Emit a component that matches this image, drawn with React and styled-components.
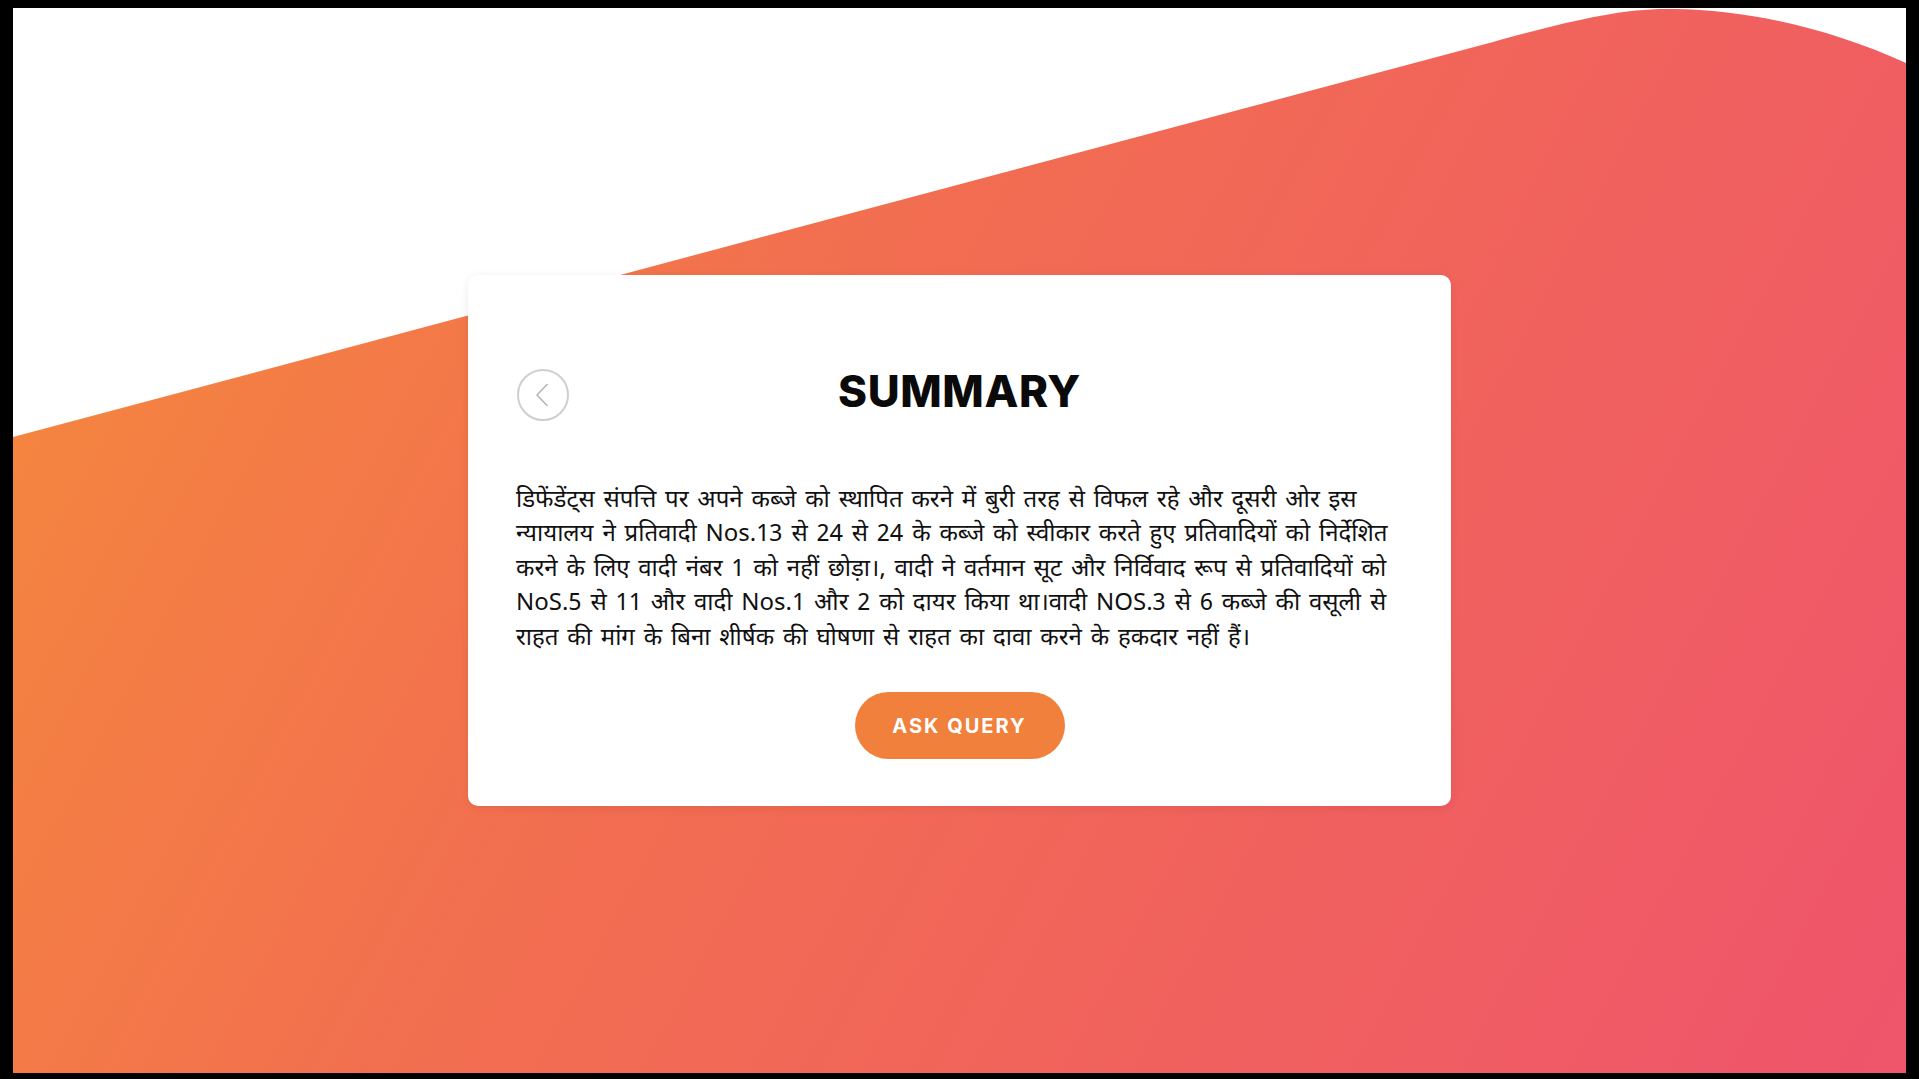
import React from "react";
import styled, { createGlobalStyle } from "styled-components";

const GlobalStyle = createGlobalStyle`
  html, body {
    margin: 0;
    padding: 0;
    background: #000;
  }
  * {
    box-sizing: border-box;
  }
`;

const Screen = styled.div`
  height: 100vh;
  padding: 8px 13px 6px 13px;
`;

const Frame = styled.main`
  position: relative;
  height: 100%;
  background: #fff;
  overflow: hidden;
  display: flex;
  align-items: center;
  justify-content: center;
`;

const Wave = styled.svg`
  position: absolute;
  inset: 0;
  width: 100%;
  height: 100%;
`;

const Card = styled.section`
  position: relative;
  width: 983px;
  background: #fff;
  border-radius: 10px;
  box-shadow: 0 2px 10px rgba(0, 0, 0, 0.08);
  padding: 93px 48px 47px 48px;
  display: flex;
  flex-direction: column;
  align-items: center;
`;

const Header = styled.div`
  width: 100%;
  display: grid;
  grid-template-columns: 54px 1fr 54px;
  align-items: center;
`;

const BackButton = styled.button`
  width: 54px;
  height: 54px;
  padding: 0;
  border: none;
  background: transparent;
  cursor: pointer;
  display: flex;
`;

const Title = styled.h1`
  margin: 0 0 8px 0;
  text-align: center;
  font-family: "Inter", "Liberation Sans", sans-serif;
  font-weight: 800;
  font-size: 44px;
  line-height: 46px;
  color: #0a0a0a;
  letter-spacing: 0.6px;
`;

const Summary = styled.p`
  width: 100%;
  margin: 62px 0 0 0;
  font-family: "Noto Sans Devanagari", "Lohit Devanagari", "Noto Sans", sans-serif;
  font-size: 24px;
  line-height: 34.6px;
  word-spacing: 2.6px;
  color: #111;
`;

const Line = styled.span`
  display: block;
  white-space: nowrap;
`;

const QueryButton = styled.button`
  margin-top: 36px;
  width: 210px;
  height: 67px;
  border: none;
  border-radius: 34px;
  background: #f0803c;
  color: #fff;
  font-family: "Inter", "Liberation Sans", sans-serif;
  font-weight: 700;
  font-size: 20px;
  letter-spacing: 2px;
  cursor: pointer;
`;

const lines = [
  "डिफेंडेंट्स संपत्ति पर अपने कब्जे को स्थापित करने में बुरी तरह से विफल रहे और दूसरी ओर इस",
  "न्यायालय ने प्रतिवादी Nos.13 से 24 से 24 के कब्जे को स्वीकार करते हुए प्रतिवादियों को निर्देशित",
  "करने के लिए वादी नंबर 1 को नहीं छोड़ा।, वादी ने वर्तमान सूट और निर्विवाद रूप से प्रतिवादियों को",
  "NoS.5 से 11 और वादी Nos.1 और 2 को दायर किया था।वादी NOS.3 से 6 कब्जे की वसूली से",
  "राहत की मांग के बिना शीर्षक की घोषणा से राहत का दावा करने के हकदार नहीं हैं।",
];

const BackIcon = () => (
  <svg width="54" height="54" viewBox="0 0 54 54">
    <circle cx="27" cy="27" r="25" fill="none" stroke="#cfcfcf" strokeWidth="2" />
    <polyline
      points="31,16.5 21,27 31,37.5"
      fill="none"
      stroke="#b5b5b5"
      strokeWidth="1.6"
      strokeLinecap="round"
      strokeLinejoin="round"
    />
  </svg>
);

export default function App() {
  return (
    <>
      <GlobalStyle />
      <Screen>
        <Frame>
          <Wave viewBox="0 0 1893 1065" preserveAspectRatio="none">
            <defs>
              <linearGradient
                id="bg"
                gradientUnits="userSpaceOnUse"
                x1="0"
                y1="0"
                x2="1893"
                y2="1010"
              >
                <stop offset="0" stopColor="#f58b3b" />
                <stop offset="0.4" stopColor="#f26e50" />
                <stop offset="1" stopColor="#ef556b" />
              </linearGradient>
            </defs>
            <path
              d="M0 429 L1480 34 C1560 12 1610 0 1660 1 C1740 2 1820 22 1893 55 L1893 1065 L0 1065 Z"
              fill="url(#bg)"
            />
          </Wave>
          <Card>
            <Header>
              <BackButton aria-label="back">
                <BackIcon />
              </BackButton>
              <Title>SUMMARY</Title>
              <span />
            </Header>
            <Summary>
              {lines.map((l, i) => (
                <Line key={i}>{l}</Line>
              ))}
            </Summary>
            <QueryButton>ASK QUERY</QueryButton>
          </Card>
        </Frame>
      </Screen>
    </>
  );
}
